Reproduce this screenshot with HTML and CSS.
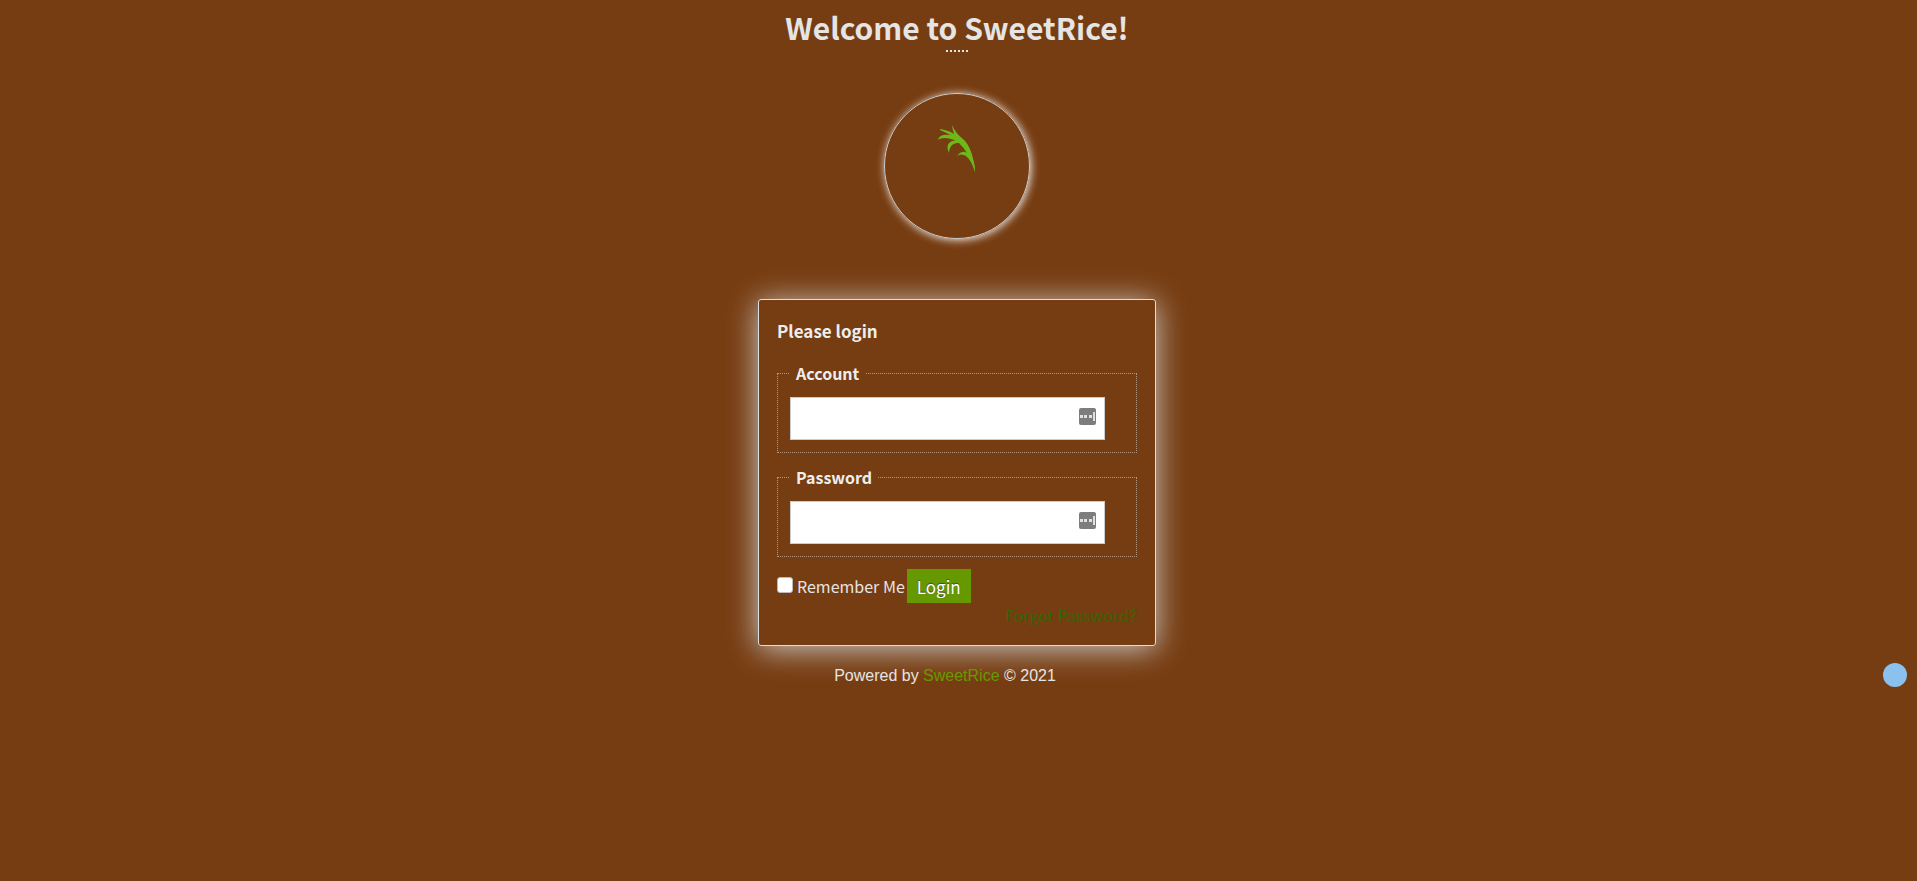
FILE: index.html
```
<!DOCTYPE html>
<html lang="en">
<head>
	<meta charset="utf-8">
	<title>Welcome to SweetRice!</title>
	<link rel="stylesheet" href="styles.css">
</head>
<body>
	<main class="page">
		<h1>Welcome to SweetRice!</h1>
		<div class="dots"></div>
		<div class="logo">
			<svg class="rice" viewBox="0 0 40 50" aria-hidden="true">
				<path d="M14 -1 Q18 8 25 13 Q35 22 37 46 Q31 26 21 17 Q15 9 14 -1Z"/>
				<path d="M2 3 Q12 4 22 12 L27 18 Q14 9 2 4Z"/>
				<path d="M0 14 Q1 8 12 9 Q19 9 26 19 Q15 12 7 12 Q2 12 0 14Z"/>
				<path d="M11 27 Q6 16 18 14 L26 17 Q14 16 12 22 Q11 24 11 27Z"/>
				<path d="M26 14 L29 18 Q34 27 35 36 L27 20Z"/>
				<path d="M19 30 Q25 22 32 29 Q37 34 37 46 Q34 35 28 30 Q23 27 19 30Z"/>
			</svg>
		</div>
		<form class="login">
			<h2>Please login</h2>
			<fieldset>
				<legend><label for="account">Account</label></legend>
				<div class="field">
					<input type="text" id="account" name="account">
					<svg class="key" viewBox="0 0 17 17" aria-hidden="true">
						<rect class="key-box" width="17" height="17" rx="2"/>
						<path class="key-dots" d="M1 7h3v3H1zM5 7h3v3H5zM10 7h3v3h-3zM14 4h2v9h-2z"/>
					</svg>
				</div>
			</fieldset>
			<fieldset>
				<legend><label for="password">Password</label></legend>
				<div class="field">
					<input type="password" id="password" name="password">
					<svg class="key" viewBox="0 0 17 17" aria-hidden="true">
						<rect class="key-box" width="17" height="17" rx="2"/>
						<path class="key-dots" d="M1 7h3v3H1zM5 7h3v3H5zM10 7h3v3h-3zM14 4h2v9h-2z"/>
					</svg>
				</div>
			</fieldset>
			<div class="actions">
				<input type="checkbox" id="remember" name="remember">
				<label for="remember">Remember Me</label>
				<button type="submit">Login</button>
			</div>
			<a class="forgot" href="#">Forgot Password?</a>
		</form>
		<footer>Powered by <a href="#">SweetRice</a> © 2021</footer>
	</main>
	<div class="bubble"></div>
</body>
</html>
```

FILE: styles.css
```
body {
	margin: 0;
	background-color: #773d12;
	color: #e5e5e5;
	font-family: "Noto Sans CJK SC", "Noto Sans", sans-serif;
	font-size: 16px;
}
.page {
	display: flex;
	flex-direction: column;
	align-items: center;
	padding-right: 3px;
}
h1 {
	margin: 5px 0 0;
	font-size: 30px;
	line-height: 45px;
	font-weight: bold;
}
.dots {
	width: 22px;
	border-bottom: 2px dotted #e5e5e5;
}
.logo {
	width: 146px;
	height: 146px;
	margin-top: 41px;
	box-sizing: border-box;
	border: 1px solid #ccc;
	border-radius: 50%;
	box-shadow: 1px 1px 8px #eee;
}
.rice {
	display: block;
	width: 40px;
	height: 50px;
	margin: 32px 0 0 53px;
	overflow: visible;
	fill: #6fb81a;
}
.login {
	width: 398px;
	max-width: 100%;
	margin-top: 60px;
	padding: 18px;
	box-sizing: border-box;
	border: 1px solid #ddd;
	border-radius: 3px;
	box-shadow: 0 3px 30px #ccc;
}
h2 {
	margin: 0 0 16px;
	color: #eee;
	font-size: 17px;
	line-height: 26px;
}
fieldset {
	margin: 0 0 11px;
	padding: 11px 12px 12px;
	border: 1px dotted #b59780;
}
legend {
	padding: 0 6px;
	color: #eee;
	line-height: 26px;
	font-weight: bold;
}
.field {
	position: relative;
	width: 315px;
	max-width: 100%;
}
.field input {
	display: block;
	width: 100%;
	height: 43px;
	padding: 4px 32px 4px 8px;
	box-sizing: border-box;
	border: 1px solid #ccc;
	background-color: #fff;
	font-size: 16px;
}
.key {
	position: absolute;
	top: 11px;
	right: 9px;
	width: 17px;
	height: 17px;
}
.key-box {
	fill: #7d7d7d;
}
.key-dots {
	fill: #e0e0e0;
}
.actions {
	display: flex;
	align-items: center;
	gap: 2px;
	margin-top: 12px;
}
.actions input {
	appearance: none;
	width: 16px;
	height: 16px;
	margin: 0 2px 2px 0;
	border: 1px solid #bbb;
	border-radius: 3px;
	background-color: #fff;
}
.actions input:checked {
	background-color: #690;
}
button {
	height: 34px;
	padding: 0 10px;
	border: none;
	background-color: #690;
	color: #fff;
	font-family: inherit;
	font-size: 17px;
	text-shadow: 0 -1px 1px #444;
	cursor: pointer;
}
.forgot {
	display: block;
	line-height: 24px;
	color: #360;
	text-align: right;
	text-decoration: none;
}
footer {
	margin-top: 20px;
	padding-right: 24px;
	font-family: "Liberation Sans", Arial, sans-serif;
	font-size: 16px;
	line-height: 20px;
}
footer a {
	color: #690;
	text-decoration: none;
}
.bubble {
	position: fixed;
	top: 663px;
	right: 10px;
	width: 24px;
	height: 24px;
	border-radius: 50%;
	background-color: #8bc1ee;
}
```
